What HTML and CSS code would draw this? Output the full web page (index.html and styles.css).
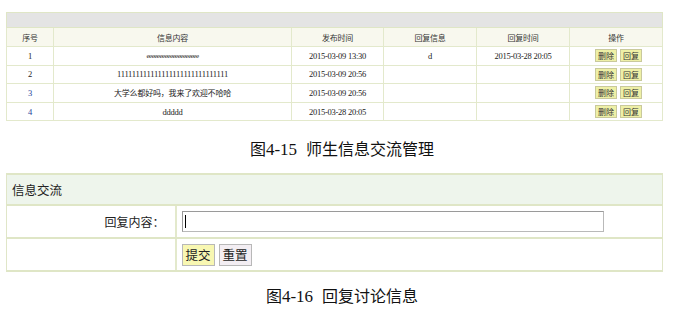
FILE: index.html
```html
<!DOCTYPE html>
<html>
<head>
<meta charset="utf-8">
<link rel="stylesheet" href="styles.css">
</head>
<body>
<div class="page">
  <table class="list">
    <colgroup>
      <col style="width:47px"><col style="width:238px"><col style="width:92px"><col style="width:93px"><col style="width:93px"><col style="width:93px">
    </colgroup>
    <tr class="bar"><td colspan="6"></td></tr>
    <tr class="head">
      <th>序号</th><th>信息内容</th><th>发布时间</th><th>回复信息</th><th>回复时间</th><th>操作</th>
    </tr>
    <tr>
      <td>1</td><td class="eee">eeeeeeeeeeeeeeeeeeee</td><td>2015-03-09 13:30</td><td>d</td><td>2015-03-28 20:05</td>
      <td class="ops"><span class="op">删除</span><span class="op">回复</span></td>
    </tr>
    <tr>
      <td>2</td><td>111111111111111111111111111111</td><td>2015-03-09 20:56</td><td></td><td></td>
      <td class="ops"><span class="op">删除</span><span class="op">回复</span></td>
    </tr>
    <tr>
      <td class="link">3</td><td class="cjk">大学么都好吗，我来了欢迎不哈哈</td><td>2015-03-09 20:56</td><td></td><td></td>
      <td class="ops"><span class="op">删除</span><span class="op">回复</span></td>
    </tr>
    <tr>
      <td class="link">4</td><td>ddddd</td><td>2015-03-28 20:05</td><td></td><td></td>
      <td class="ops"><span class="op">删除</span><span class="op">回复</span></td>
    </tr>
  </table>

  <p class="caption cap1">图<span class="num">4-15</span><span class="title">师生信息交流管理</span></p>

  <table class="form">
    <colgroup><col style="width:169px"><col></colgroup>
    <tr class="fhead"><td colspan="2">信息交流</td></tr>
    <tr class="frow">
      <td class="label">回复内容：</td>
      <td><div class="input"><span class="caret"></span></div></td>
    </tr>
    <tr class="frow">
      <td></td>
      <td><span class="btn submit">提交</span><span class="btn reset">重置</span></td>
    </tr>
  </table>

  <p class="caption cap2">图<span class="num">4-16</span><span class="title">回复讨论信息</span></p>
</div>
</body>
</html>
```
FILE: styles.css
```css
* { box-sizing: border-box; }
html, body { margin: 0; padding: 0; background: #fff; }
body { font-family: "Noto Sans CJK SC", "Noto Sans", sans-serif; color: #222; }
.page { padding: 12px 0 0 6px; width: 687px; }

.list {
  width: 657px;
  border-collapse: collapse;
  table-layout: fixed;
  border: 1px solid #dfe6c6;
}
.list td, .list th {
  border: 1px solid #e3e9cc;
  text-align: center;
  padding: 0;
  height: 18.6px;
  font-family: "Liberation Serif", "Noto Sans CJK SC", serif;
  font-size: 8.5px;
  letter-spacing: -0.25px;
  color: #222;
  font-weight: normal;
  white-space: nowrap;
  overflow: hidden;
}
.list td.link { color: #27439a; }
.list td.eee { font-size: 7px; letter-spacing: -0.5px; }
.list .bar td { background: #e4e4e4; height: 15px; border: 1px solid #dfe6c6; }
.list .head th {
  background: #f8f8ee;
  font-family: "Noto Sans CJK SC", sans-serif;
  font-size: 8px;
  letter-spacing: -0.2px;
  height: 19px;
  color: #333;
}
.list td.cjk { font-family: "Noto Sans CJK SC", sans-serif; font-size: 8px; letter-spacing: -0.2px; }
.list td.ops { text-align: left; padding-left: 25px; }
.op {
  display: inline-block;
  font-family: "Noto Sans CJK SC", sans-serif;
  font-size: 8px;
  letter-spacing: 0;
  line-height: 11px;
  padding: 0 2px;
  margin-right: 3px;
  background: #eef0a6;
  border: 1px solid #c9c99c;
  color: #333;
  vertical-align: middle;
}

.caption {
  margin: 0;
  text-align: center;
  font-family: "Noto Sans CJK SC", sans-serif;
  font-size: 16px;
  color: #111;
  width: 672px;
}
.caption .num { font-family: "Liberation Serif", serif; font-size: 17px; }
.caption .title { margin-left: 9px; }
.cap1 { padding-top: 16px; height: 52px; line-height: 22px; }
.cap2 { padding-top: 12px; line-height: 22px; }

.form {
  width: 657px;
  border-collapse: collapse;
  table-layout: fixed;
}
.form td {
  padding: 0;
  font-size: 12.5px;
  color: #222;
  border-left: 1px solid #e0e6c8;
  border-right: 1px solid #e0e6c8;
}
.fhead td {
  background: #eef5ec;
  border-top: 2px solid #dfe6c6;
  border-bottom: 2px solid #dfe6c6;
  height: 31px;
  padding-left: 5px;
}
.frow td { height: 33px; border-bottom: 2px solid #dfe6c6; }
.frow td + td { border-left: 2px solid #e3e9cc; padding-left: 5px; }
.label { text-align: right; padding-right: 10px !important; font-size: 12px !important; }
.input {
  width: 422px;
  height: 21px;
  border: 1px solid #b9b9b9;
  border-top-color: #9a9a9a;
  border-left-color: #9a9a9a;
  position: relative;
  background: #fff;
}
.caret { position: absolute; left: 2px; top: 3px; width: 1px; height: 13px; background: #000; }
.btn {
  display: inline-block;
  height: 22px;
  line-height: 19px;
  padding: 0 3px;
  font-size: 12.5px;
  border: 1px solid #b8b8b8;
  margin-right: 4px;
  vertical-align: middle;
}
.submit { background: #f8f7b2; }
.reset { background: #f3eef3; }
```
